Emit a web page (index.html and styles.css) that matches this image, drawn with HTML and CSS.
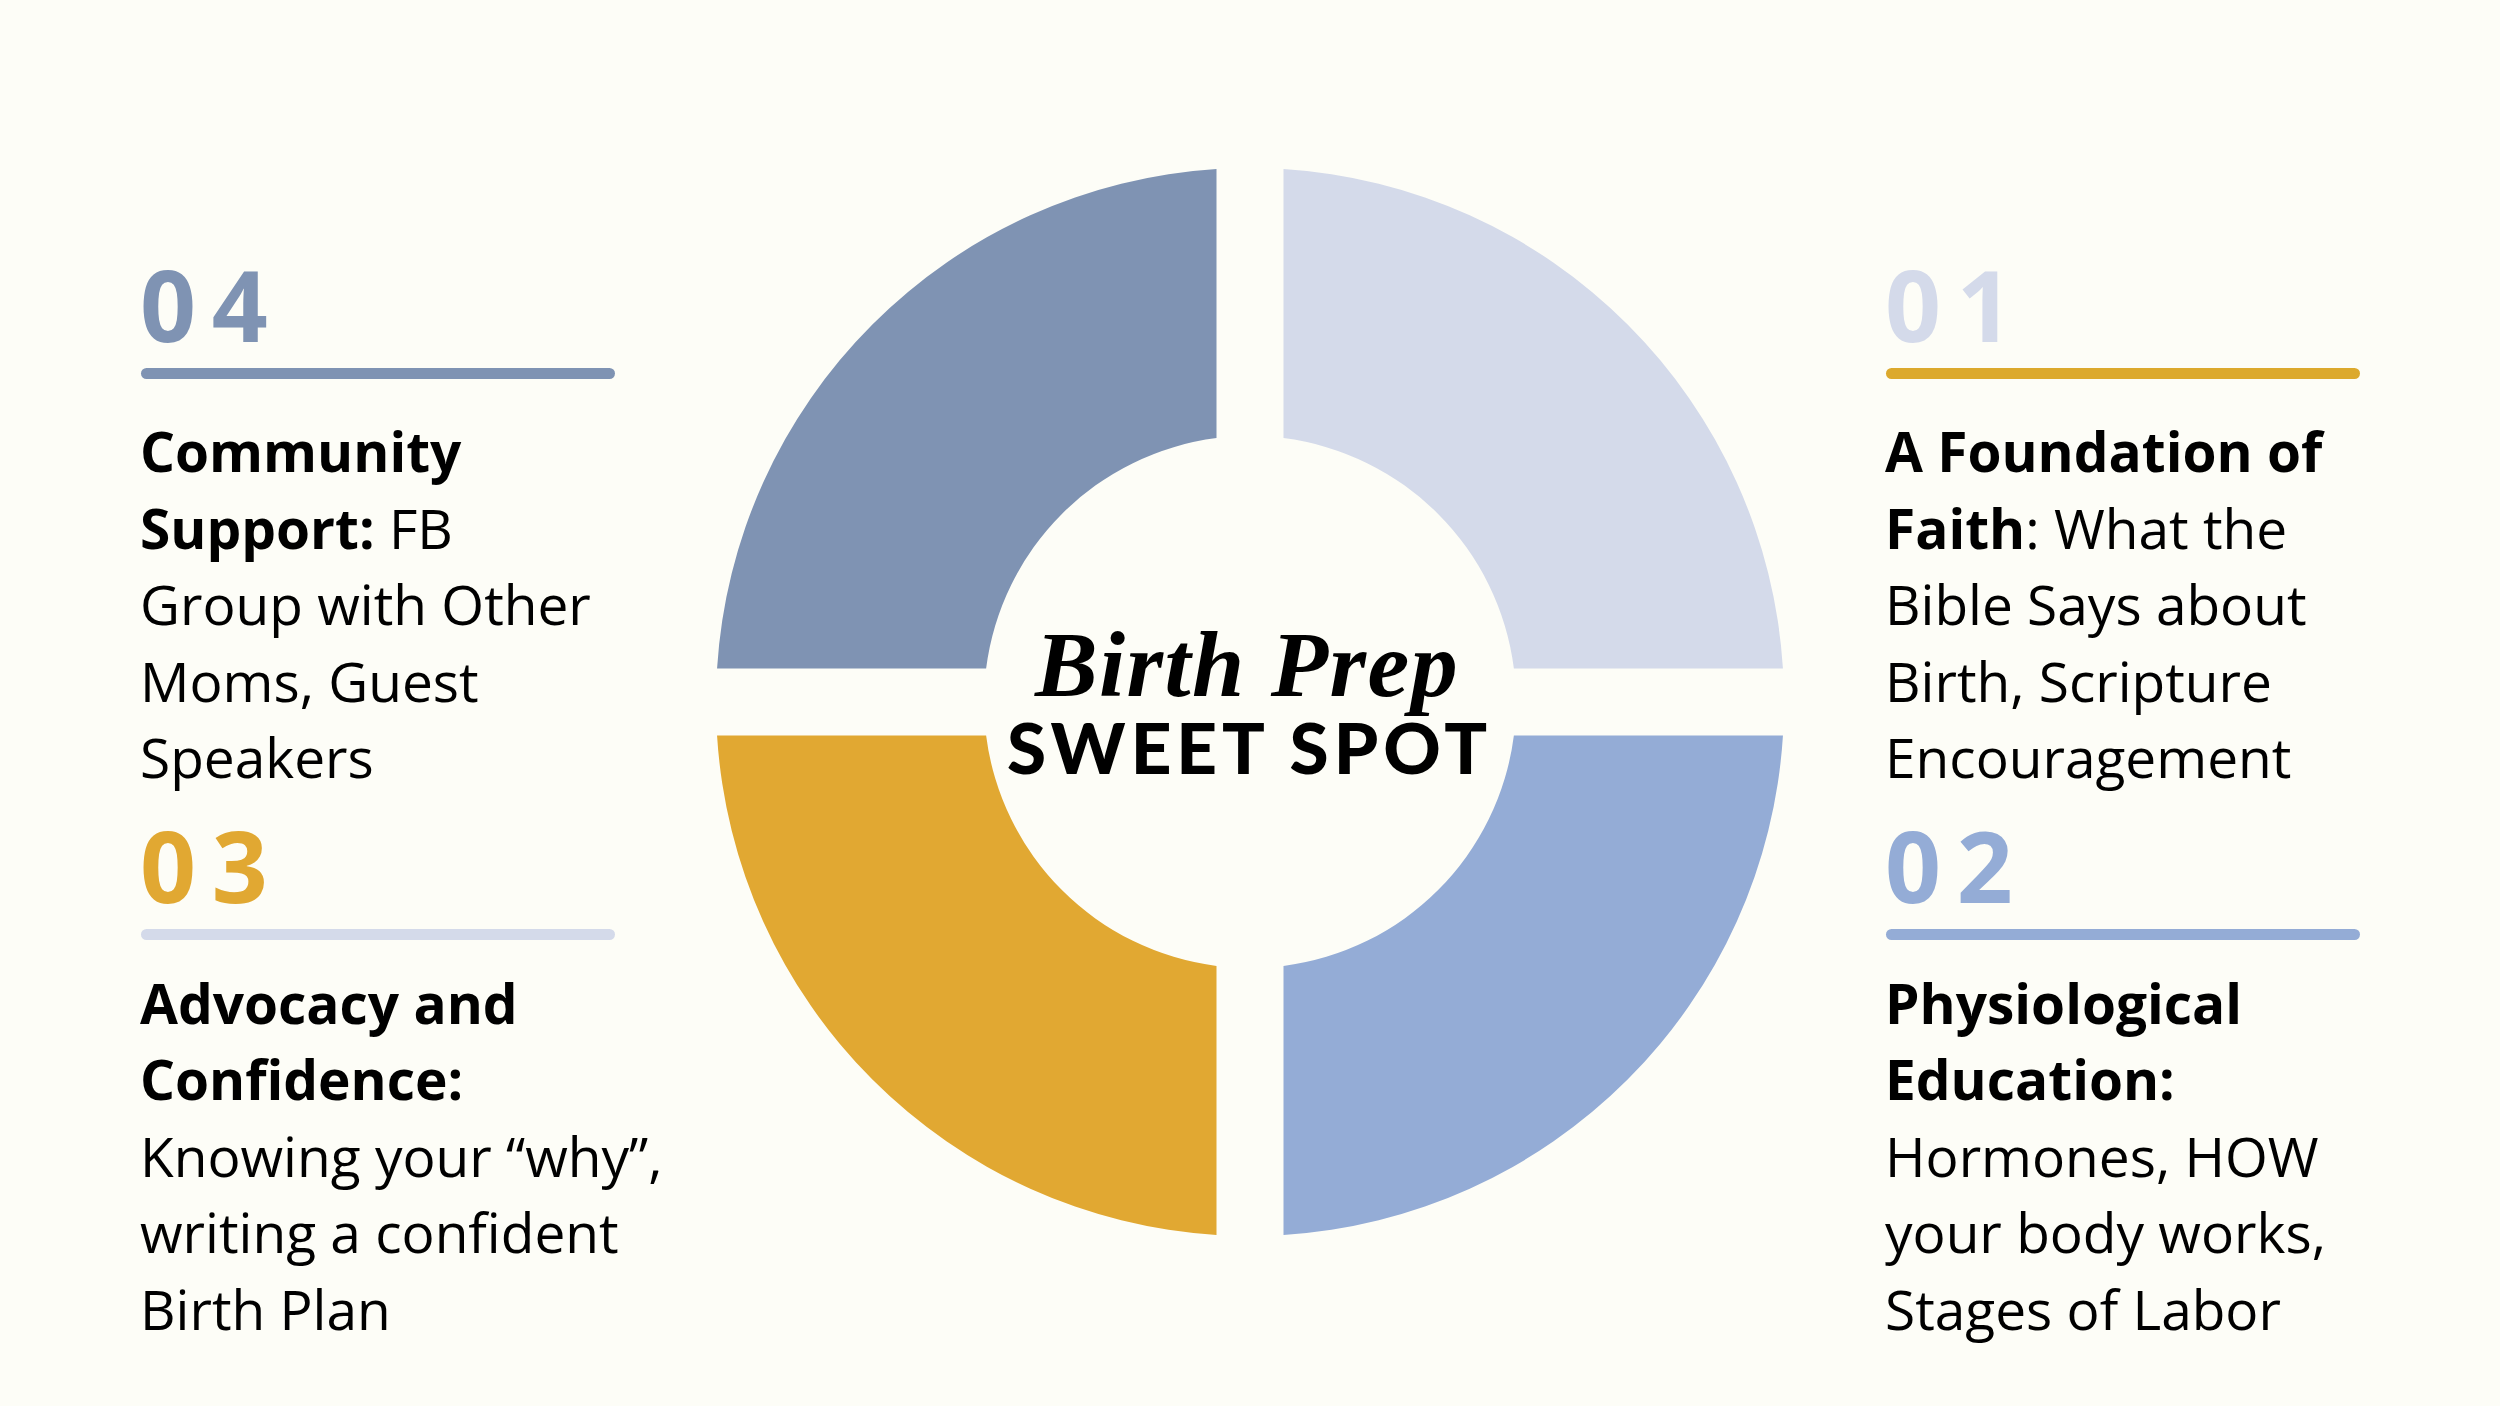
FILE: index.html
```html
<!DOCTYPE html>
<html lang="en">
<head>
<meta charset="utf-8">
<title>Birth Prep Sweet Spot</title>
<link rel="stylesheet" href="styles.css">
</head>
<body>
<main class="page">
  <section class="col col-left">
    <div class="item item-top">
      <div class="num num-slate">04</div>
      <div class="rule rule-slate"></div>
      <p class="desc"><b>Community<br>Support:</b> FB<br>Group with Other<br>Moms, Guest<br>Speakers</p>
    </div>
    <div class="item item-bottom">
      <div class="num num-gold">03</div>
      <div class="rule rule-pale"></div>
      <p class="desc"><b>Advocacy and<br>Confidence:</b><br>Knowing your “why”,<br>writing a confident<br>Birth Plan</p>
    </div>
  </section>

  <div class="chart">
    <svg class="ring" viewBox="0 0 1068 1068" width="1068" height="1068" aria-hidden="true">
      <path class="seg-tl" d="M 500.5 1.05 A 534 534 0 0 0 1.05 500.5 L 270.12 500.5 A 266 266 0 0 1 500.5 270.12 Z"/>
      <path class="seg-tr" d="M 567.5 1.05 A 534 534 0 0 1 1066.95 500.5 L 797.88 500.5 A 266 266 0 0 0 567.5 270.12 Z"/>
      <path class="seg-br" d="M 1066.95 567.5 A 534 534 0 0 1 567.5 1066.95 L 567.5 797.88 A 266 266 0 0 0 797.88 567.5 Z"/>
      <path class="seg-bl" d="M 500.5 1066.95 A 534 534 0 0 1 1.05 567.5 L 270.12 567.5 A 266 266 0 0 0 500.5 797.88 Z"/>
    </svg>
    <div class="label">
      <div class="label-script">Birth Prep</div>
      <div class="label-caps">SWEET SPOT</div>
    </div>
  </div>

  <section class="col col-right">
    <div class="item item-top">
      <div class="num num-pale">01</div>
      <div class="rule rule-gold"></div>
      <p class="desc"><b>A Foundation of<br>Faith</b>: What the<br>Bible Says about<br>Birth, Scripture<br>Encouragement</p>
    </div>
    <div class="item item-bottom">
      <div class="num num-blue">02</div>
      <div class="rule rule-blue"></div>
      <p class="desc"><b>Physiological<br>Education:</b><br>Hormones, HOW<br>your body works,<br>Stages of Labor</p>
    </div>
  </section>
</main>
</body>
</html>
```

FILE: styles.css
```css
html, body {
  margin: 0;
  padding: 0;
}

body {
  width: 2500px;
  height: 1406px;
  overflow: hidden;
  background: #fdfdf7;
  color: #000;
  font-family: "Open Sans", "Liberation Sans", sans-serif;
}

.page {
  display: flex;
  align-items: flex-start;
  padding-left: 140px;
  height: 1406px;
  box-sizing: border-box;
}

.col {
  display: flex;
  flex-direction: column;
  padding-top: 255px;
}

.col-left {
  width: 576px;
  flex: none;
}

.col-right {
  margin-left: 101px;
  width: 560px;
  flex: none;
}

.item {
  display: flex;
  flex-direction: column;
}

.item-bottom {
  margin-top: 20px;
}

.num {
  font-family: "Open Sans", sans-serif;
  font-weight: 700;
  font-size: 98px;
  line-height: 98px;
  letter-spacing: 0.16em;
  height: 98px;
}

.num-slate { color: #7f93b3; }
.num-gold  { color: #e1a832; }
.num-pale  { color: #d4daea; }
.num-blue  { color: #94acd6; }

.rule {
  width: 474px;
  height: 11px;
  border-radius: 6px;
  margin-top: 15px;
  margin-left: 1px;
}

.rule-slate { background: #7f93b3; }
.rule-pale  { background: #d4daea; }
.rule-gold  { background: #dca92d; }
.rule-blue  { background: #94acd6; }

.desc {
  margin: 34px 0 0 0;
  font-size: 55px;
  line-height: 76.5px;
  font-weight: 400;
  white-space: nowrap;
}

.item-bottom .desc {
  margin-top: 25px;
}

.desc b {
  font-weight: 700;
}

.chart {
  flex: none;
  width: 1068px;
  height: 1068px;
  margin-top: 168px;
  display: grid;
}

.chart > * {
  grid-area: 1 / 1;
}

.ring {
  display: block;
}

.seg-tl { fill: #7f93b3; }
.seg-tr { fill: #d4daea; }
.seg-br { fill: #94acd6; }
.seg-bl { fill: #e1a832; }

.label {
  align-self: start;
  margin-top: 449px;
  text-align: center;
  margin-left: -6px;
}

.label-script {
  font-family: "Liberation Serif", "Times New Roman", serif;
  font-style: italic;
  font-weight: 700;
  font-size: 94px;
  line-height: 94px;
  letter-spacing: 0.015em;
}

.label-caps {
  font-family: "Lato", "Liberation Sans", sans-serif;
  font-weight: 900;
  font-size: 71px;
  line-height: 71px;
  letter-spacing: 0.07em;
  padding-left: 0.07em;
  margin-top: 0;
}
```
